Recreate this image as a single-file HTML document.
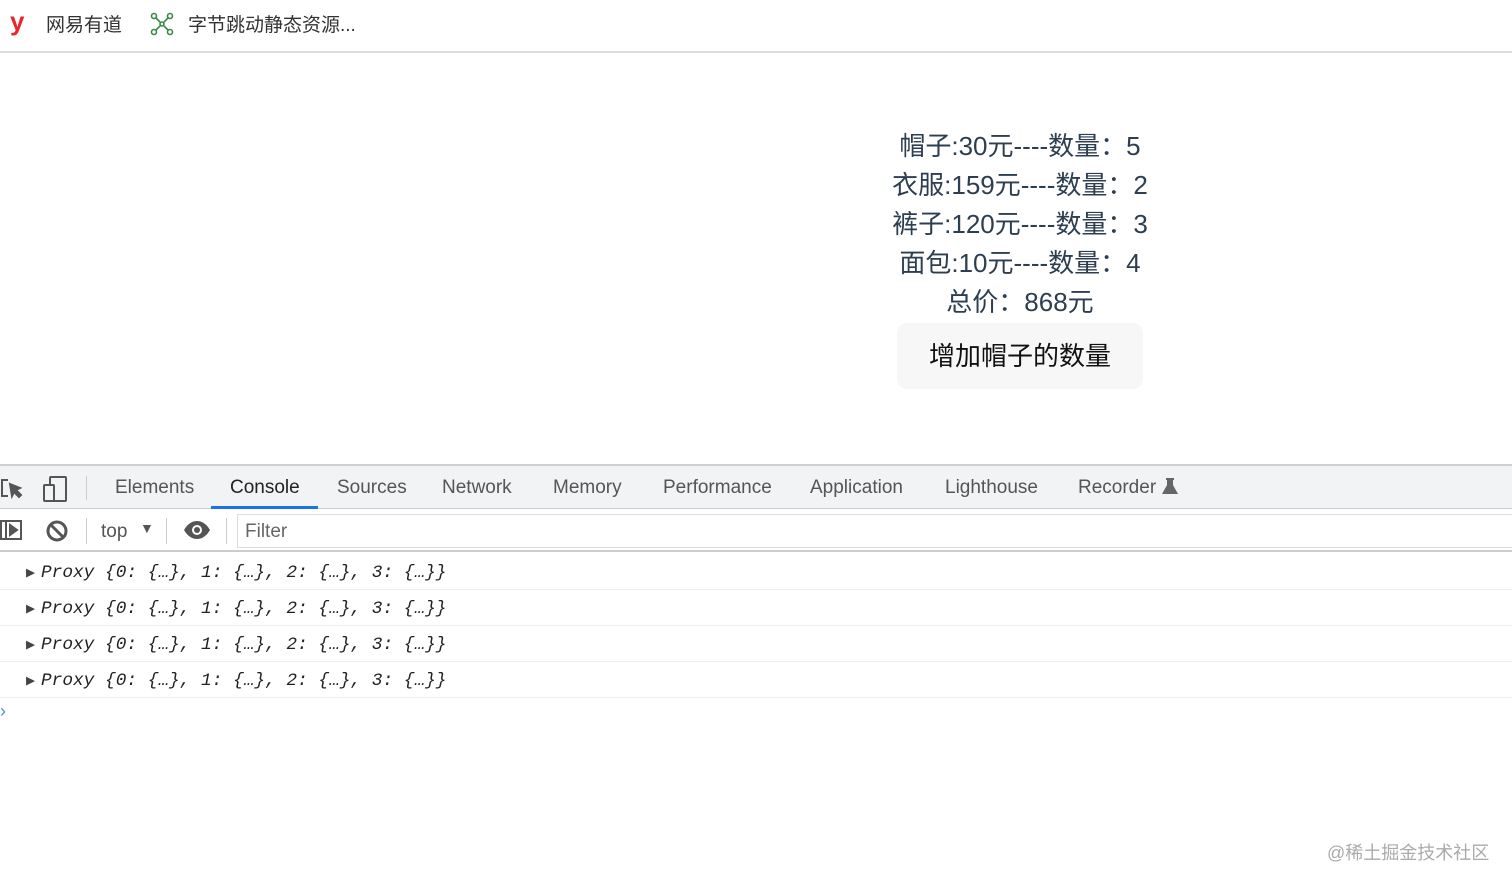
<!DOCTYPE html>
<html><head><meta charset="utf-8"><style>
*{margin:0;padding:0;box-sizing:border-box}
body{width:1512px;height:886px;background:#fff;position:relative;overflow:hidden;font-family:"Liberation Sans","Noto Sans CJK SC",sans-serif}
.abs{position:absolute;white-space:nowrap}
.bm{font-size:19px;color:#333;top:10px}
.app{position:absolute;left:820px;width:400px;top:127px;text-align:center;color:#2c3e50;font-size:26px;line-height:39px}
.btn{display:inline-block;margin-top:1px;width:246px;height:66px;line-height:66px;background:#f7f7f7;border-radius:10px;color:#111;font-size:26px}
.tabs{position:absolute;top:464px;left:0;width:1512px;height:45px;background:#f1f3f4;border-top:2px solid #d0d0d0;border-bottom:1px solid #ccc}
.tab{position:absolute;top:11px;font-size:19px;color:#555}
.tb{position:absolute;top:510px;left:0;width:1512px;height:42px;border-bottom:2px solid #ccc;background:#fff}
.row{position:absolute;left:0;width:1512px;height:36px;border-bottom:1px solid #eee;font-family:"Liberation Mono",monospace;font-style:italic;font-size:17.8px;color:#222}
.row span.t{position:absolute;left:26px;top:9px;font-style:normal;font-size:15px;color:#444}
.row span.x{position:absolute;left:41px;top:9px}
</style></head><body>
<div class="abs" style="left:10px;top:6px;color:#e8272d;font-weight:900;font-size:26px">y</div>
<div class="abs bm" style="left:46px">网易有道</div>
<svg class="abs" style="left:150px;top:12px" width="24" height="24" viewBox="0 0 24 24" fill="none" stroke="#3a8a4a" stroke-width="1.6"><circle cx="4" cy="4" r="2.5"/><circle cx="20" cy="4" r="2.5"/><circle cx="4" cy="20" r="2.5"/><circle cx="20" cy="20" r="2.5"/><path d="M6 6l4 4M18 6l-4 4M6 18l4-4M18 18l-4-4"/><circle cx="12" cy="12" r="2"/></svg>
<div class="abs bm" style="left:188px">字节跳动静态资源...</div>
<div style="position:absolute;top:51px;left:0;width:1512px;height:2px;background:#ddd"></div>

<div class="app">
<div>帽子:30元----数量：5</div>
<div>衣服:159元----数量：2</div>
<div>裤子:120元----数量：3</div>
<div>面包:10元----数量：4</div>
<div>总价：868元</div>
<div class="btn">增加帽子的数量</div>
</div>

<div class="tabs">
<svg class="abs" style="left:0;top:10px" width="26" height="26" viewBox="0 0 26 26" fill="none" stroke="#555" stroke-width="2"><path d="M8 4H2v16h6"/><path d="M10 8l10 4-4 2 5 5-2 2-5-5-2 4z" fill="#555"/></svg>
<svg class="abs" style="left:42px;top:9px" width="26" height="28" viewBox="0 0 26 28" fill="none" stroke="#555" stroke-width="2"><rect x="8" y="2" width="16" height="24" rx="1"/><rect x="2" y="10" width="10" height="16" rx="1" fill="#f1f3f4"/></svg>
<div style="position:absolute;left:86px;top:10px;width:1px;height:24px;background:#ccc"></div>
<div class="tab" style="left:115px">Elements</div>
<div class="tab" style="left:230px;color:#222">Console</div>
<div style="position:absolute;left:211px;top:40px;width:107px;height:3px;background:#1a73e8"></div>
<div class="tab" style="left:337px">Sources</div>
<div class="tab" style="left:442px">Network</div>
<div class="tab" style="left:553px">Memory</div>
<div class="tab" style="left:663px">Performance</div>
<div class="tab" style="left:810px">Application</div>
<div class="tab" style="left:945px">Lighthouse</div>
<div class="tab" style="left:1078px">Recorder</div>
<svg class="abs" style="left:1162px;top:11px" width="16" height="18" viewBox="0 0 16 18"><path d="M4 1h8v2h-1v5l5 9H0l5-9V3H4z" fill="#666"/></svg>
</div>

<div class="tb">
<svg class="abs" style="left:0;top:9px" width="24" height="22" viewBox="0 0 24 22" fill="none" stroke="#555" stroke-width="2"><rect x="1" y="2" width="20" height="18"/><path d="M6 2v18"/><path d="M10 6l7 5-7 5z" fill="#555"/></svg>
<svg class="abs" style="left:45px;top:9px" width="24" height="24" viewBox="0 0 24 24" fill="none" stroke="#555" stroke-width="3"><circle cx="12" cy="12" r="9"/><path d="M6 6l12 12"/></svg>
<div style="position:absolute;left:86px;top:8px;width:1px;height:26px;background:#ccc"></div>
<div class="abs" style="left:101px;top:11px;font-size:19px;color:#555">top</div>
<div class="abs" style="left:140px;top:10px;font-size:14px;color:#555">▼</div>
<div style="position:absolute;left:166px;top:8px;width:1px;height:26px;background:#ccc"></div>
<svg class="abs" style="left:183px;top:10px" width="28" height="20" viewBox="0 0 28 20"><path d="M1 10C5 3 10 1 14 1s9 2 13 9c-4 7-9 9-13 9S5 17 1 10z" fill="#555"/><circle cx="14" cy="10" r="5" fill="#fff"/><circle cx="14" cy="10" r="3" fill="#555"/></svg>
<div style="position:absolute;left:226px;top:8px;width:1px;height:26px;background:#ccc"></div>
<div style="position:absolute;left:237px;top:4px;width:1275px;height:34px;border:1px solid #ddd;border-right:none"></div>
<div class="abs" style="left:245px;top:11px;font-size:19px;color:#666">Filter</div>
</div>

<div class="row" style="top:554px"><span class="t">▶</span><span class="x">Proxy {0: {…}, 1: {…}, 2: {…}, 3: {…}}</span></div>
<div class="row" style="top:590px"><span class="t">▶</span><span class="x">Proxy {0: {…}, 1: {…}, 2: {…}, 3: {…}}</span></div>
<div class="row" style="top:626px"><span class="t">▶</span><span class="x">Proxy {0: {…}, 1: {…}, 2: {…}, 3: {…}}</span></div>
<div class="row" style="top:662px"><span class="t">▶</span><span class="x">Proxy {0: {…}, 1: {…}, 2: {…}, 3: {…}}</span></div>
<div class="abs" style="left:0;top:701px;color:#4a8ff0;font-size:18px">›</div>

<div class="abs" style="left:1327px;top:839px;font-size:18px;color:#aaa">@稀土掘金技术社区</div>
</body></html>
